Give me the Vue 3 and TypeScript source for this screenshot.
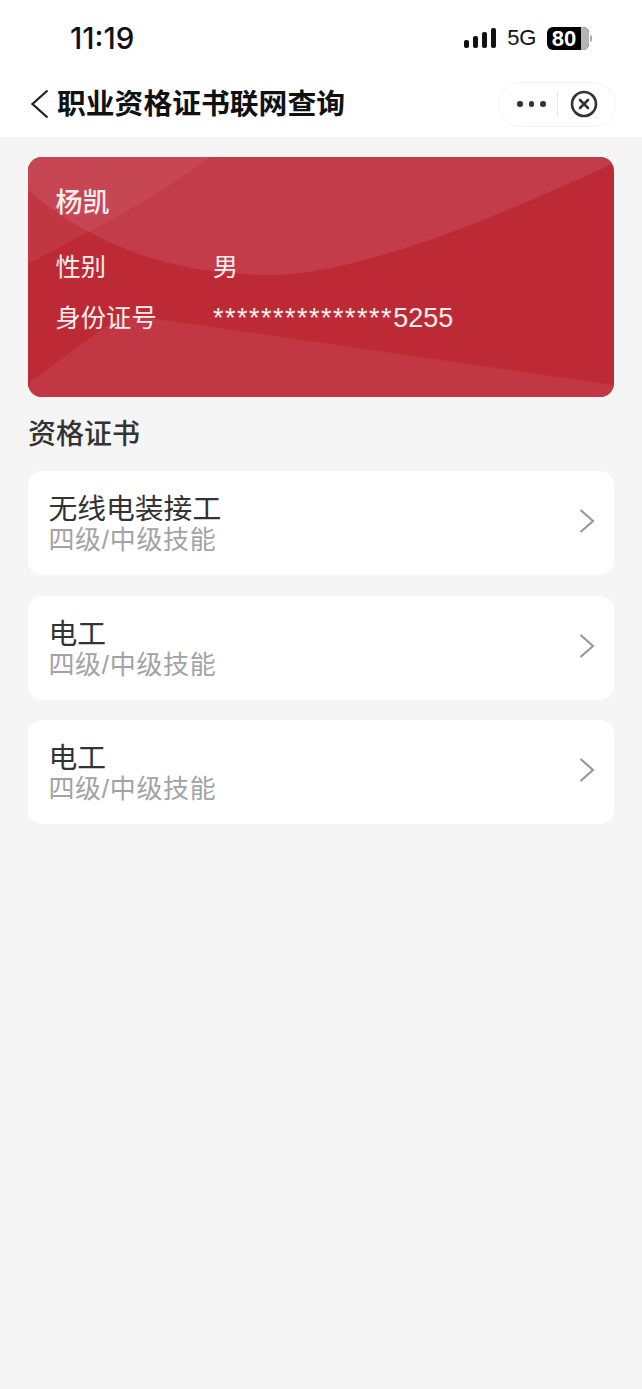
<script setup lang="ts">
interface Cert { name: string; level: string }
const certs: Cert[] = [
  { name: '无线电装接工', level: '四级/中级技能' },
  { name: '电工', level: '四级/中级技能' },
  { name: '电工', level: '四级/中级技能' },
]
const bars = [8, 12, 16, 20]
</script>

<template>
  <div class="page">
    <header class="top">
      <div class="status">
        <span class="time">11:19</span>
        <div class="status-right">
          <div class="signal"><i v-for="h in bars" :key="h" class="bar" :style="{ height: h + 'px' }"></i></div>
          <span class="net">5G</span>
          <div class="battery"><span class="level">80</span><span class="rest"></span></div>
          <span class="nub"></span>
        </div>
      </div>
      <div class="nav">
        <svg class="back" width="20" height="30" viewBox="0 0 20 30"><path d="M17.5 1.5 2.5 15l15 13.5" fill="none" stroke="#222" stroke-width="2.3"/></svg>
        <h1 class="title">职业资格证书联网查询</h1>
        <div class="capsule">
          <span class="dots"><i></i><i></i><i></i></span>
          <span class="sep"></span>
          <svg width="28" height="28" viewBox="0 0 28 28"><circle cx="14" cy="14" r="12" fill="none" stroke="#333" stroke-width="2.6"/><path d="m10 10 8 8m0-8-8 8" stroke="#333" stroke-width="2.6" stroke-linecap="round"/></svg>
        </div>
      </div>
    </header>

    <main class="content">
      <section class="card">
        <svg class="card-bg" viewBox="0 0 586 240" preserveAspectRatio="none">
          <rect width="586" height="240" fill="#bd2a36"/>
          <path d="M0 33C60 85 140 118 242 118C330 118 470 60 586 6V0H0Z" fill="#c33c49"/>
          <path d="M0 107C70 70 130 40 182 0H0Z" fill="#fff" fill-opacity=".06"/>
          <path d="M0 226 95 157 586 228V240H0Z" fill="#c13743"/>
        </svg>
        <div class="name">杨凯</div>
        <div class="info">
          <span class="label">性别</span><span class="value">男</span>
        </div>
        <div class="info id">
          <span class="label">身份证号</span><span class="value"><span class="stars">***************</span>5255</span>
        </div>
      </section>

      <h2 class="section">资格证书</h2>

      <ul class="list">
        <li v-for="(c, i) in certs" :key="i" class="row">
          <div class="row-text">
            <div class="row-name">{{ c.name }}</div>
            <div class="row-level">{{ c.level }}</div>
          </div>
          <svg class="chevron" width="16" height="26" viewBox="0 0 16 26"><path d="M1.5 2 14 13 1.5 24" fill="none" stroke="#999" stroke-width="2.2"/></svg>
        </li>
      </ul>
    </main>
  </div>
</template>

<style scoped>
.page {
  width: 642px;
  height: 1389px;
  background: #f5f5f5;
  overflow: hidden;
  font-family: "Liberation Sans", "Noto Sans CJK SC", sans-serif;
}
.top { background: #fff; height: 137px; }
.status {
  height: 76px;
  display: flex;
  justify-content: space-between;
  align-items: center;
  padding: 0 50px 0 70px;
}
.time { font: 500 29.5px Inter, "Liberation Sans", sans-serif; color: #111; }
.status-right { display: flex; align-items: center; }
.signal { display: flex; align-items: flex-end; gap: 4px; margin-right: 11px; }
.bar { width: 5px; background: #111; border-radius: 2px; display: block; }
.net { font: 400 22px "Liberation Sans", sans-serif; color: #111; margin-right: 11px; letter-spacing: -.3px; }
.battery {
  width: 42px;
  height: 23px;
  border-radius: 6px;
  background: #000;
  display: flex;
  overflow: hidden;
}
.level { flex: 1; color: #fff; font: 700 22px/23px "Liberation Sans", sans-serif; text-align: center; white-space: nowrap; }
.rest { width: 8px; background: #b5b5b5; }
.nub { width: 2px; height: 7px; margin-left: 1px; background: #aaa; border-radius: 0 2px 2px 0; }
.nav {
  height: 56px;
  display: flex;
  align-items: center;
  padding: 0 26px 0 30px;
}
.back { margin-right: 7px; }
.title { flex: 1; margin: 0; font-size: 28.8px; font-weight: 700; color: #111; line-height: 40px; white-space: nowrap; }
.capsule {
  width: 118px;
  height: 45px;
  box-sizing: border-box;
  border: 1px solid #f3f3f3;
  border-radius: 23px;
  display: flex;
  align-items: center;
  padding-left: 18px;
}
.dots { display: flex; gap: 6px; width: 40px; }
.dots i { width: 5.5px; height: 5.5px; border-radius: 50%; background: #333; display: block; }
.sep { width: 1px; height: 26px; background: #e8e8e8; margin-right: 12px; }
.content { padding: 20px 28px 0; }
.card {
  position: relative;
  height: 240px;
  box-sizing: border-box;
  border-radius: 14px;
  overflow: hidden;
  padding: 27px 28px 0 27.5px;
  color: #fbeeee;
}
.card-bg { position: absolute; inset: 0; width: 100%; height: 100%; display: block; }
.name { position: relative; font-size: 27px; line-height: 36px; font-weight: 500; margin-top: 1px; }
.info { position: relative; display: flex; font-size: 25px; line-height: 34px; margin-top: 29px; }
.info.id { margin-top: 17px; }
.label { width: 157.5px; font-size: 25.3px; }
.id .value { font-size: 27px; }
.stars { letter-spacing: 1.5px; }
.section { margin: 19px 0 17px; font-size: 28px; font-weight: 500; line-height: 38px; color: #333; }
.list { list-style: none; margin: 0; padding: 0; display: flex; flex-direction: column; gap: 20.5px; }
.row {
  height: 104px;
  box-sizing: border-box;
  background: #fff;
  border-radius: 14px;
  padding: 0 19px 0 20.4px;
  display: flex;
  align-items: center;
  justify-content: space-between;
}
.row-text { padding-top: 1px; }
.row-name { font-size: 28.8px; line-height: 33px; color: #333; }
.row-level { font-size: 26px; line-height: 28px; color: #a3a3a3; letter-spacing: .7px; }
.chevron { margin-bottom: 4px; }
</style>
